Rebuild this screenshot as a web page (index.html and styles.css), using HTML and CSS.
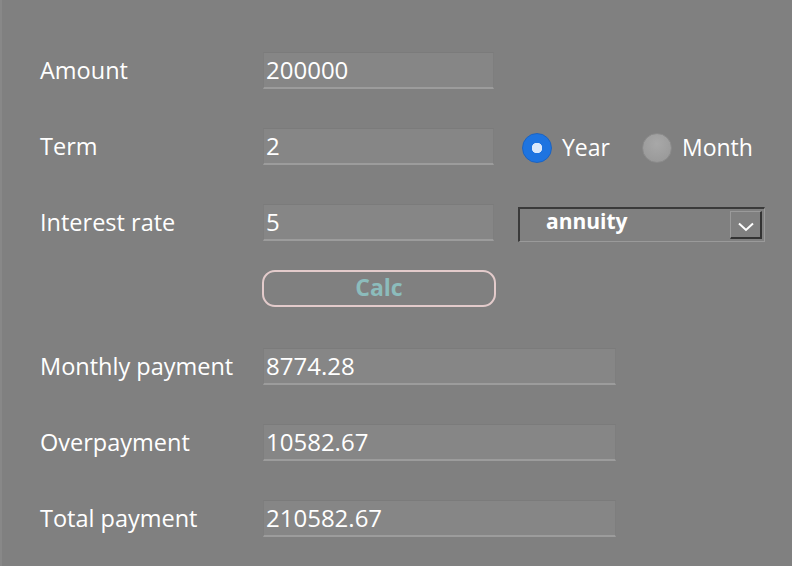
FILE: index.html
```html
<!DOCTYPE html>
<html>
<head>
<meta charset="utf-8">
<link rel="stylesheet" href="styles.css">
</head>
<body>
<div class="calc">
  <div class="row">
    <label class="label">Amount</label>
    <div class="field">200000</div>
  </div>
  <div class="row">
    <label class="label">Term</label>
    <div class="field">2</div>
    <div class="radios">
      <span class="radio checked"></span><span class="rlabel">Year</span>
      <span class="radio"></span><span class="rlabel">Month</span>
    </div>
  </div>
  <div class="row">
    <label class="label">Interest rate</label>
    <div class="field">5</div>
    <div class="select">
      <span class="select-text">annuity</span>
      <span class="select-btn">
        <svg width="18" height="10" viewBox="0 0 18 10"><path d="M2 1.5 L9 8 L16 1.5" fill="none" stroke="#fff" stroke-width="2"/></svg>
      </span>
    </div>
  </div>
  <div class="row btn-row">
    <button class="btn">Calc</button>
  </div>
  <div class="row">
    <label class="label">Monthly payment</label>
    <div class="field wide">8774.28</div>
  </div>
  <div class="row">
    <label class="label">Overpayment</label>
    <div class="field wide">10582.67</div>
  </div>
  <div class="row">
    <label class="label">Total payment</label>
    <div class="field wide">210582.67</div>
  </div>
</div>
</body>
</html>
```

FILE: styles.css
```css
html, body {
  margin: 0;
  padding: 0;
  background: #808080;
  height: 100%;
}
body {
  border-left: 2px solid #888888;
  box-sizing: border-box;
  font-family: "Open Sans", "Noto Sans", sans-serif;
  color: #ffffff;
}
.calc {
  padding: 52px 0 0 38px;
}
.row {
  display: flex;
  align-items: center;
  height: 37px;
  margin-bottom: 39px;
}
.label {
  width: 223px;
  font-size: 23.5px;
  line-height: 37px;
}
.field {
  box-sizing: border-box;
  width: 231px;
  height: 37px;
  background: #868686;
  border-top: 1px solid #7b7b7b;
  border-left: 1px solid #7e7e7e;
  border-right: 1px solid #7e7e7e;
  border-bottom: 2px solid #9c9c9c;
  padding-left: 2px;
  font-size: 24px;
  line-height: 34px;
}
.field.wide {
  width: 353px;
}
.radios {
  display: flex;
  align-items: center;
  margin-left: 28px;
}
.radio {
  box-sizing: border-box;
  width: 30px;
  height: 30px;
  border-radius: 50%;
  background: radial-gradient(circle at 50% 35%, #a8a8a8, #969696);
  border: 1px solid #8a8a8a;
  margin-top: 3px;
}
.radio.checked {
  background: radial-gradient(circle, #dbe9fb 0 5px, #1e74e0 5.5px);
  border: 1px solid #1a63c3;
}
.rlabel {
  font-size: 23px;
  margin-left: 10px;
  margin-right: 32px;
}
.select {
  box-sizing: border-box;
  margin-left: 24px;
  width: 247px;
  height: 35px;
  margin-top: 4px;
  border-top: 2px solid #3a3a3a;
  border-left: 2px solid #3a3a3a;
  border-right: 1px solid #9a9a9a;
  border-bottom: 1px solid #9a9a9a;
  display: flex;
  align-items: center;
  justify-content: space-between;
  padding: 0 2px 0 26px;
}
.select-text {
  font-weight: 700;
  font-size: 21px;
  margin-top: -9px;
}
.select-btn {
  box-sizing: border-box;
  width: 32px;
  height: 28px;
  border-top: 1px solid #9a9a9a;
  border-left: 1px solid #9a9a9a;
  border-right: 2px solid #333;
  border-bottom: 2px solid #333;
  display: flex;
  align-items: center;
  justify-content: center;
  padding-top: 4px;
}
.btn-row {
  padding-left: 223px;
  margin-top: -10px;
  margin-bottom: 41px;
}
.btn {
  box-sizing: border-box;
  margin-left: -1px;
  width: 234px;
  height: 37px;
  background: transparent;
  border: 2px solid #e3cbcb;
  border-radius: 13px;
  color: #8cbcbc;
  font-family: "Open Sans", "Noto Sans", sans-serif;
  font-weight: 700;
  font-size: 23px;
  line-height: 30px;
  padding: 0 0 3px 0;
}
```
